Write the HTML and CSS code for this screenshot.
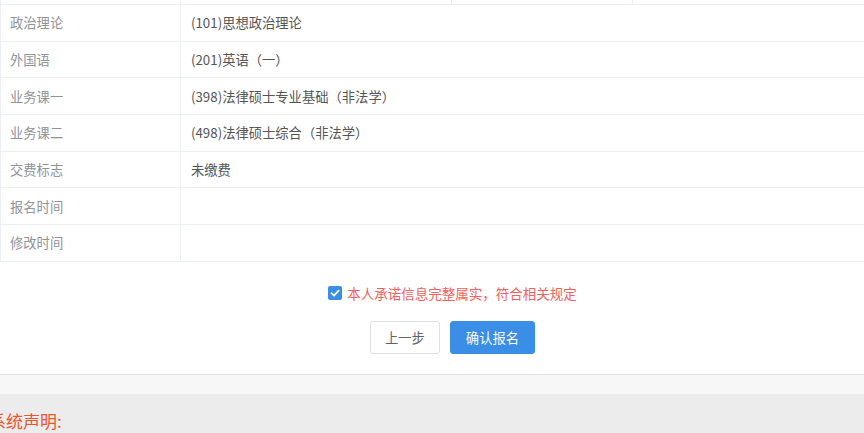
FILE: index.html
```html
<!DOCTYPE html>
<html lang="zh-CN">

<head>
    <meta charset="UTF-8">
    <meta name="viewport" content="width=device-width, initial-scale=1.0">
    <title>报名信息确认</title>
    <link rel="stylesheet" href="styles.css">
</head>

<body>
    <div class="main">
        <div class="info-table">
            <div class="row row-top">
                <div class="cell"></div>
                <div class="cell"></div>
                <div class="cell"></div>
                <div class="cell"></div>
            </div>
            <div class="row">
                <div class="cell label">政治理论</div>
                <div class="cell value">(101)思想政治理论</div>
            </div>
            <div class="row">
                <div class="cell label">外国语</div>
                <div class="cell value">(201)英语（一）</div>
            </div>
            <div class="row">
                <div class="cell label">业务课一</div>
                <div class="cell value">(398)法律硕士专业基础（非法学）</div>
            </div>
            <div class="row">
                <div class="cell label">业务课二</div>
                <div class="cell value">(498)法律硕士综合（非法学）</div>
            </div>
            <div class="row">
                <div class="cell label">交费标志</div>
                <div class="cell value">未缴费</div>
            </div>
            <div class="row">
                <div class="cell label">报名时间</div>
                <div class="cell value"></div>
            </div>
            <div class="row">
                <div class="cell label">修改时间</div>
                <div class="cell value"></div>
            </div>
        </div>

        <div class="actions">
            <label class="agree">
                <span class="checkbox">
                    <svg width="10" height="10" viewBox="0 0 10 10">
                        <path d="M1.5 5.2 L4 7.6 L8.6 2.6" fill="none" stroke="#fff" stroke-width="1.8" stroke-linecap="round" stroke-linejoin="round" />
                    </svg>
                </span>
                本人承诺信息完整属实，符合相关规定
            </label>
            <div class="buttons">
                <button class="btn">上一步</button>
                <button class="btn btn-primary">确认报名</button>
            </div>
        </div>
    </div>

    <div class="band"></div>
    <div class="footer">
        <div class="notice-title">系统声明:</div>
    </div>
</body>

</html>
```

FILE: styles.css
```css
body {
    margin: 0;
    padding: 0;
    background-color: #ececec;
    font-family: "Noto Sans CJK SC", "Microsoft YaHei", sans-serif;
    overflow: hidden;
}

.main {
    background-color: #fff;
    padding-bottom: 20px;
    border-bottom: 1px solid #e6e6e6;
}

.info-table {
    border-left: 1px solid #ebeef5;
}

.row {
    display: grid;
    grid-template-columns: 180px 1fr;
    height: 36.7px;
    box-sizing: border-box;
    border-bottom: 1px solid #ebeef5;
}

.row-top {
    grid-template-columns: 180px 271px 181px 1fr;
    height: 5px;
}

.cell {
    display: flex;
    align-items: center;
    font-size: 13.3px;
}

.row .cell:not(:last-child) {
    border-right: 1px solid #ebeef5;
}

.label {
    padding-left: 9px;
    color: #909399;
}

.value {
    padding-left: 10px;
    color: #555;
}

.actions {
    display: flex;
    flex-direction: column;
    align-items: center;
    padding-left: 41px;
}

.agree {
    display: flex;
    align-items: center;
    margin-top: 21px;
    height: 20px;
    color: #f0625f;
    font-size: 13.5px;
}

.checkbox {
    width: 14px;
    height: 14px;
    margin-right: 5px;
    border-radius: 2px;
    background-color: #3a8ee6;
    display: flex;
    align-items: center;
    justify-content: center;
}

.buttons {
    display: flex;
    gap: 10px;
    margin-top: 18px;
}

.btn {
    height: 33px;
    padding: 0 14px;
    border: 1px solid #dcdfe6;
    border-radius: 3px;
    background-color: #fff;
    color: #606266;
    font-family: inherit;
    font-size: 13.3px;
}

.btn-primary {
    padding: 0 15px;
    border-color: #3a8ee6;
    background-color: #3a8ee6;
    color: #fff;
}

.band {
    height: 19px;
    background-color: #f7f7f7;
}

.footer {
    background-color: #ececec;
    padding-top: 15px;
    height: 24px;
}

.notice-title {
    color: #e9542d;
    font-size: 17px;
    line-height: 24px;
    text-indent: -11px;
}
```
